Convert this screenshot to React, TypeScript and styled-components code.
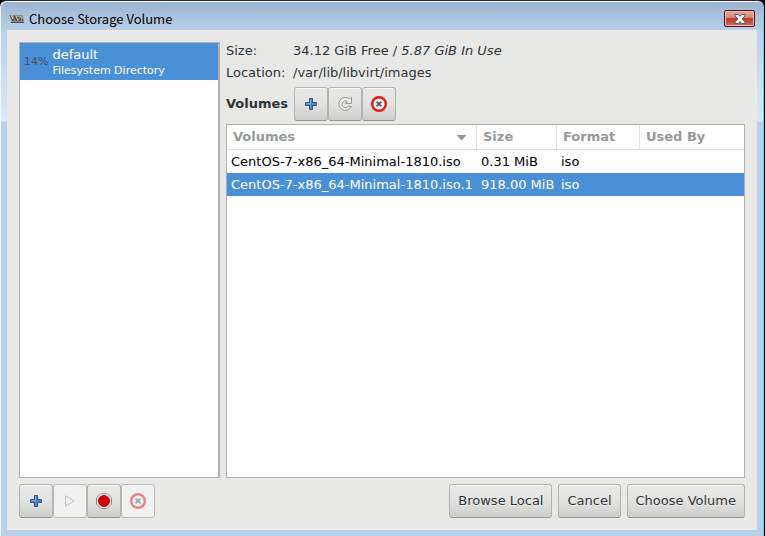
import React from "react";
import styled, { createGlobalStyle, css } from "styled-components";

const GlobalStyle = createGlobalStyle`
  *, *::before, *::after { box-sizing: border-box; }
  html, body, #root { height: 100%; }
  body {
    margin: 0;
    overflow: hidden;
    background: #000;
    color: #2e3436;
    font: 13px/22px "DejaVu Sans", sans-serif;
  }
`;

const Window = styled.div`
  display: flex;
  flex-direction: column;
  height: calc(100vh - 1px);
  margin-top: 1px;
  margin-right: 1px;
  padding: 0 6px 6px;
  border: solid #f4f8fc;
  border-width: 1px 1px 0 1px;
  border-right-color: #5cd3ee;
  border-radius: 6px 6px 0 0;
  background: linear-gradient(#9ab4d1, #b9d1ea 29px, #b9d1ea) top / 100% 29px no-repeat,
    linear-gradient(#b9d1ea, #dbe8f5 90px, #b9d1ea 91px) 0 29px no-repeat;
  box-shadow: 0 -1px #2b2b30;
`;

const TitleBar = styled.header`
  display: flex;
  align-items: center;
  flex: none;
  height: 28px;
  padding: 5px 2px 0;
  color: #000;
`;

const Title = styled.h1`
  flex: 1;
  margin: 0 0 0 5px;
  font: 13px/20px "Noto Sans CJK SC", sans-serif;
`;

const CloseButton = styled.button`
  display: grid;
  place-items: center;
  width: 31px;
  height: 17px;
  padding: 0;
  border: 1px solid #54121b;
  border-radius: 2px;
  background: linear-gradient(#e6a59b, #d98275 45%, #bd3f29 50%, #cf6d5a);
  box-shadow: inset 0 0 0 1px #edb9b0;
`;

const Content = styled.main`
  display: flex;
  flex: 1;
  flex-direction: column;
  gap: 6px;
  min-height: 0;
  padding: 12px;
  background: #e8e8e6;
`;

const Panes = styled.div`
  display: grid;
  flex: 1;
  grid-template-columns: 201px 1fr;
  gap: 6px;
  min-height: 0;
`;

const PoolList = styled.ul`
  margin: 0;
  padding: 0;
  border: 1px solid #b1b1ad;
  border-right-width: 2px;
  background: #fff;
  list-style: none;
`;

const PoolRow = styled.li`
  display: flex;
  align-items: center;
  gap: 4px;
  height: 37px;
  padding-left: 4px;
  background: #4a90d9;
  color: #fff;
`;

const Usage = styled.span`
  color: #44525f;
  font-size: 11px;
`;

const PoolText = styled.div`
  padding-top: 2px;
`;

const PoolName = styled.div`
  line-height: 16px;
`;

const PoolType = styled.div`
  font-size: 11px;
  line-height: 15px;
`;

const Details = styled.section`
  display: flex;
  flex-direction: column;
  min-width: 0;
`;

const Info = styled.dl`
  display: grid;
  grid-template-columns: 67px 1fr;
  margin: -2px 0 0;
`;

const Term = styled.dt``;

const Value = styled.dd`
  margin: 0;
`;

const VolumeBar = styled.div`
  display: flex;
  align-items: center;
  gap: 6px;
  margin: 3px 0;
`;

const SectionTitle = styled.h2`
  margin: 0;
  font-size: 13px;
`;

const ButtonGroup = styled.div`
  display: flex;
`;

const raised = css`
  border: 1px solid #b3b3b0;
  border-bottom-color: #949490;
  border-radius: 3px;
  background: linear-gradient(#e9e9e8, #e2e2e0 50%, #cdcdcb);
  box-shadow: inset 0 1px #f6f6f5;
  color: #2e3436;
`;

const IconButton = styled.button`
  ${raised}
  display: grid;
  place-items: center;
  width: 34px;
  height: 34px;
  padding: 0;

  &:disabled {
    border-color: #b8b8b5;
    background: #f1f1f1;
    box-shadow: none;
  }
`;

const TextButton = styled.button`
  ${raised}
  height: 34px;
  padding: 0 8px;
  font: inherit;
  text-shadow: 0 1px #f4f4f2;
  white-space: nowrap;
`;

const TableFrame = styled.div`
  flex: 1;
  min-height: 0;
  border: 1px solid #b1b1ad;
  background: #fff;
`;

const Table = styled.table`
  width: 100%;
  border-collapse: separate;
  border-spacing: 0;
  table-layout: fixed;
  color: #000;
`;

const Column = styled.col<{ $width?: number }>`
  width: ${({ $width }) => ($width ? `${$width}px` : "auto")};
`;

const HeadCell = styled.th`
  height: 25px;
  padding: 0 6px;
  border-bottom: 1px solid #e4e4e2;
  color: #969a98;
  text-align: left;
  white-space: nowrap;

  &:not(:last-child) {
    border-right: 1px solid #e4e4e2;
  }
`;

const SortLabel = styled.div`
  display: flex;
  align-items: center;
  justify-content: space-between;
  padding-right: 3px;
`;

const Row = styled.tr<{ $selected?: boolean }>`
  background: ${({ $selected }) => ($selected ? "#4a90d9" : "#fff")};
  color: ${({ $selected }) => ($selected ? "#fff" : "#000")};
`;

const Cell = styled.td`
  height: 23px;
  padding: 0 0 0 4px;
  white-space: nowrap;
`;

const Footer = styled.footer`
  display: flex;
  flex: none;
  justify-content: space-between;
`;

const Actions = styled.div`
  display: flex;
  gap: 6px;
`;

const Logo = () => (
  <svg width="15" height="10" viewBox="0 0 15 10" aria-hidden="true">
    <path d="M0 1h14l1 8H3z" fill="#918d8a" />
    <path d="M1 1l3 6 2-5 1 5 2-4 2 4 1-4 2 4" fill="none" stroke="#4d4946" />
    <path d="M2 1l2 4M7 2l2 4M11 2l2 3" stroke="#d7d3ce" />
    <path d="M2 8.5h13" stroke="#55514e" />
  </svg>
);

const CloseGlyph = () => (
  <svg width="12" height="10" viewBox="0 0 12 10" aria-hidden="true">
    <path d="M1 .5h3.4L6 2.4 7.6.5H11v1.3L8.2 5 11 8.2v1.3H7.6L6 7.6 4.4 9.5H1V8.2L3.8 5 1 1.8z" fill="#f5f5f5" stroke="#565c69" />
  </svg>
);

const AddIcon = () => (
  <svg width="16" height="16" viewBox="0 0 16 16" aria-hidden="true">
    <path d="M6.5 2.5h3v4h4v3h-4v4h-3v-4h-4v-3h4z" fill="#5686c0" stroke="#2c5591" strokeLinejoin="round" />
    <path d="M7.5 3.5v4h-4" fill="none" stroke="#86acd8" />
  </svg>
);

const RefreshIcon = () => (
  <svg width="16" height="16" viewBox="0 0 16 16" aria-hidden="true">
    <path
      d="M14.5 1v6.5H8.4l2-2.1a3.5 3.5 0 1 0 .9 5h3A6.5 6.5 0 1 1 12.6 3z"
      fill="#f1f1ef"
      stroke="#969692"
      strokeLinejoin="round"
    />
  </svg>
);

const DeleteIcon = ({ faded = false }: { faded?: boolean }) => (
  <svg width="16" height="16" viewBox="0 0 16 16" opacity={faded ? 0.5 : 1} aria-hidden="true">
    <circle cx="8" cy="8" r="6.8" fill="#f4f4f3" stroke="#e3191d" strokeWidth="2.4" />
    <path d="M5.6 5.6l4.8 4.8M10.4 5.6l-4.8 4.8" stroke="#5a5e5a" strokeWidth="2" />
  </svg>
);

const PlayIcon = () => (
  <svg width="16" height="16" viewBox="0 0 16 16" aria-hidden="true">
    <path d="M3.5 2.8v10.4L12.3 8z" fill="#f0f0ef" stroke="#c3c3c0" strokeLinejoin="round" />
  </svg>
);

const StopIcon = () => (
  <svg width="16" height="16" viewBox="0 0 16 16" aria-hidden="true">
    <path d="M5 .5h6L15.5 5v6L11 15.5H5L.5 11V5z" fill="#f4f4f2" stroke="#888a85" />
    <circle cx="8" cy="8" r="5.6" fill="#d40000" stroke="#b00000" strokeWidth=".8" />
  </svg>
);

const SortArrow = () => (
  <svg width="11" height="8" viewBox="0 0 11 8" aria-hidden="true">
    <path d="M.5 2h10l-5 5.5z" fill="#929694" />
  </svg>
);

const volumes = [
  { name: "CentOS-7-x86_64-Minimal-1810.iso", size: "0.31 MiB", format: "iso" },
  { name: "CentOS-7-x86_64-Minimal-1810.iso.1", size: "918.00 MiB", format: "iso", selected: true },
];

export default function App() {
  return (
    <>
      <GlobalStyle />
      <Window>
        <TitleBar>
          <Logo />
          <Title>Choose Storage Volume</Title>
          <CloseButton aria-label="Close">
            <CloseGlyph />
          </CloseButton>
        </TitleBar>
        <Content>
          <Panes>
            <PoolList>
              <PoolRow aria-current="true">
                <Usage>14%</Usage>
                <PoolText>
                  <PoolName>default</PoolName>
                  <PoolType>Filesystem Directory</PoolType>
                </PoolText>
              </PoolRow>
            </PoolList>
            <Details>
              <Info>
                <Term>Size:</Term>
                <Value>
                  34.12 GiB Free / <em>5.87 GiB In Use</em>
                </Value>
                <Term>Location:</Term>
                <Value>/var/lib/libvirt/images</Value>
              </Info>
              <VolumeBar>
                <SectionTitle>Volumes</SectionTitle>
                <ButtonGroup>
                  <IconButton aria-label="Add volume"><AddIcon /></IconButton>
                  <IconButton aria-label="Refresh volumes"><RefreshIcon /></IconButton>
                  <IconButton aria-label="Delete volume"><DeleteIcon /></IconButton>
                </ButtonGroup>
              </VolumeBar>
              <TableFrame>
                <Table>
                  <colgroup>
                    <Column $width={250} />
                    <Column $width={80} />
                    <Column $width={83} />
                    <Column />
                  </colgroup>
                  <thead>
                    <tr>
                      <HeadCell aria-sort="ascending">
                        <SortLabel>
                          Volumes
                          <SortArrow />
                        </SortLabel>
                      </HeadCell>
                      <HeadCell>Size</HeadCell>
                      <HeadCell>Format</HeadCell>
                      <HeadCell>Used By</HeadCell>
                    </tr>
                  </thead>
                  <tbody>
                    {volumes.map((v) => (
                      <Row key={v.name} $selected={v.selected}>
                        <Cell>{v.name}</Cell>
                        <Cell>{v.size}</Cell>
                        <Cell>{v.format}</Cell>
                        <Cell />
                      </Row>
                    ))}
                  </tbody>
                </Table>
              </TableFrame>
            </Details>
          </Panes>
          <Footer>
            <ButtonGroup>
              <IconButton aria-label="Add pool"><AddIcon /></IconButton>
              <IconButton aria-label="Start pool" disabled><PlayIcon /></IconButton>
              <IconButton aria-label="Stop pool"><StopIcon /></IconButton>
              <IconButton aria-label="Delete pool" disabled><DeleteIcon faded /></IconButton>
            </ButtonGroup>
            <Actions>
              <TextButton>Browse Local</TextButton>
              <TextButton>Cancel</TextButton>
              <TextButton>Choose Volume</TextButton>
            </Actions>
          </Footer>
        </Content>
      </Window>
    </>
  );
}
